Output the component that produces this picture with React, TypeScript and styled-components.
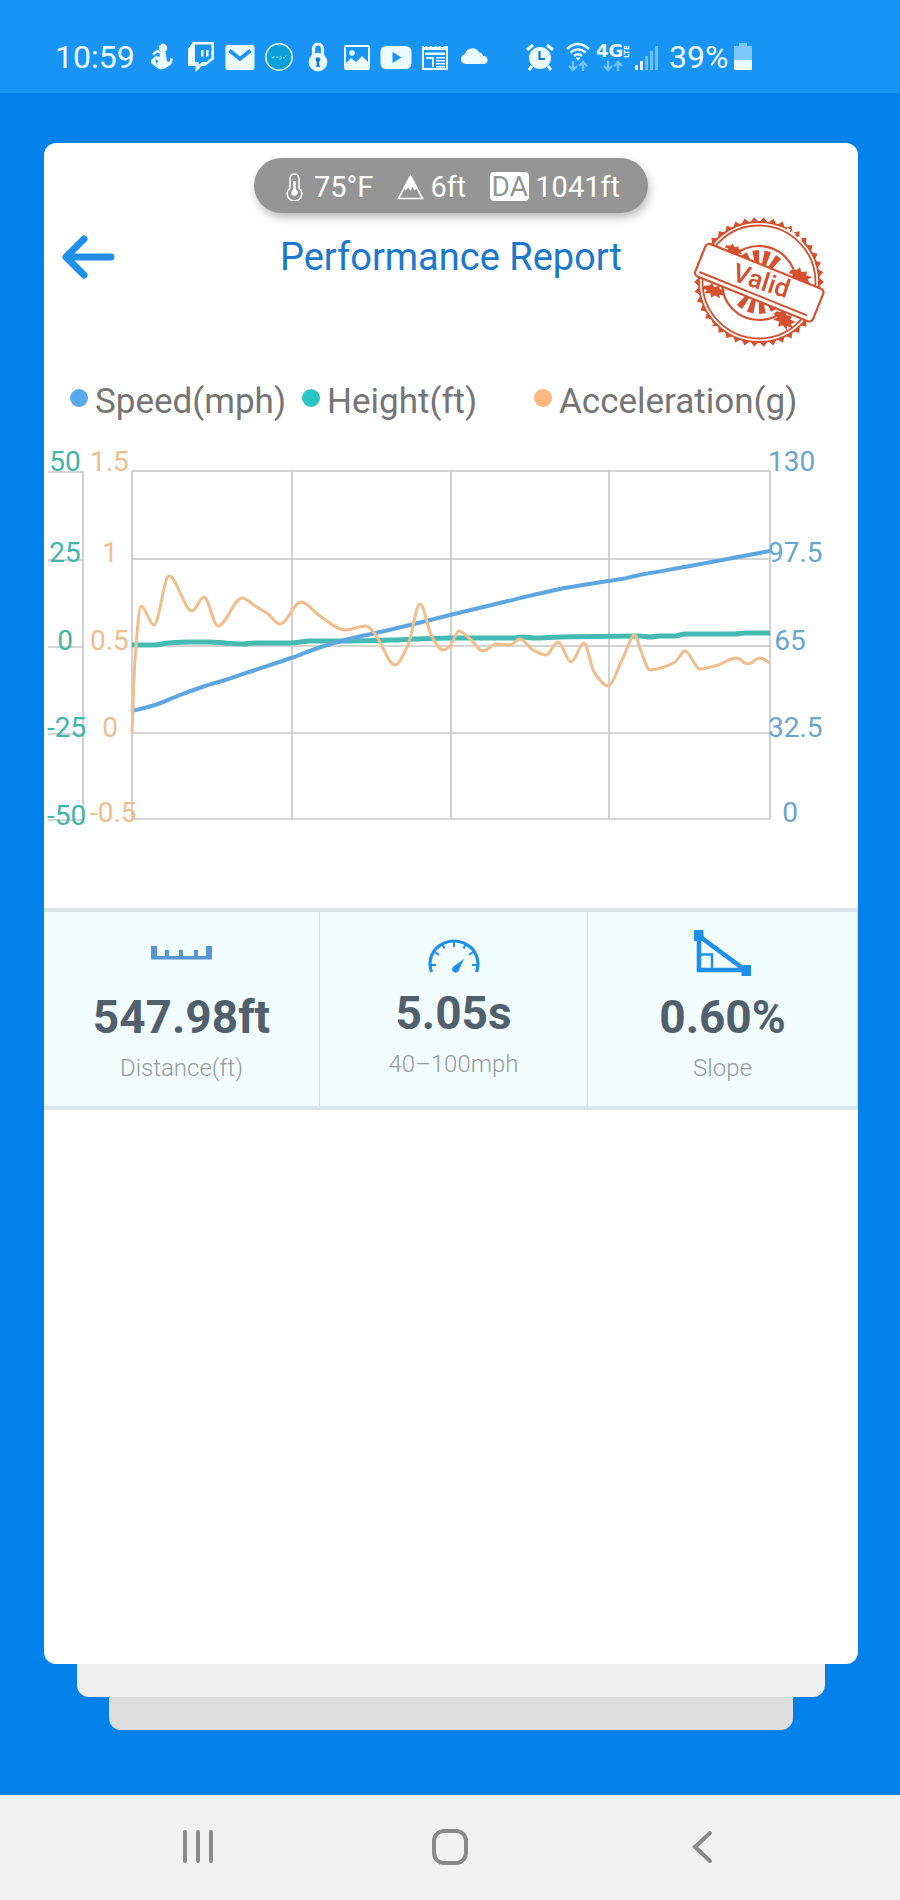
import React from "react";
import styled, { createGlobalStyle } from "styled-components";

const GlobalStyle = createGlobalStyle`
  *, *::before, *::after { box-sizing: border-box; }
  body { margin: 0; background: #0281eb; }
  button { border: 0; padding: 0; background: none; font: inherit; cursor: pointer; }
  h1, p, ul, dl, dd { margin: 0; padding: 0; }
  svg { display: block; flex: none; }
`;

const ICE = "#ebfbff";
const BLUE = "#1e90ea";
const STAMP = "#d4502f";

const Screen = styled.div`
  display: flex;
  flex-direction: column;
  min-height: 100vh;
  font-family: Roboto, "Liberation Sans", sans-serif;
`;

/* ---------- status bar ---------- */

const StatusBar = styled.header`
  display: flex;
  align-items: center;
  height: 93px;
  padding: 21px 0 0 55px;
  background: #1894f5;
  color: ${ICE};
  overflow: hidden;
`;

const StatusText = styled.span`
  font-size: 32px;
  line-height: 38px;
  white-space: nowrap;
`;

const IconGroup = styled.div<{ $start: number }>`
  display: flex;
  align-items: center;
  margin-left: ${(p) => p.$start}px;
`;

const IconSlot = styled.span<{ $width?: number }>`
  display: flex;
  justify-content: center;
  flex: none;
  width: ${(p) => p.$width ?? 39}px;
`;

const StatusIcon = ({ width = 30, children }: { width?: number; children: React.ReactNode }) => (
  <svg width={width} height={32} viewBox={`0 0 ${width} 32`} fill={ICE} aria-hidden="true">
    {children}
  </svg>
);

const BabyIcon = () => (
  <StatusIcon>
    <circle cx="16" cy="7" r="4.200" />
    <path d="M13 11 L18.500 10.500 L19.500 18 Q20 22 22.500 20.500 L23.500 17 L26 18 Q25 24 21 25.500 Q18 28.500 13 28.500 L9 26 L4 22 L4 19 L9 15 L12.500 16 Z" />
    <path d="M6 13.500 L10 10 L13 11.500" fill="none" stroke={ICE} strokeWidth="2.400" />
    <path d="M8.500 18 L11.500 20 L9 23 Z" fill="#1894f5" />
  </StatusIcon>
);

const TwitchIcon = () => (
  <StatusIcon>
    <path
      fillRule="evenodd"
      d="M2 8 L7 1 H28 V18 L19 25 H16 L9.500 31 V25 H2 Z M9 3.500 V21 H12.500 V24 L16 21 H20.500 L25.500 16.500 V3.500 Z"
    />
    <path d="M15 9 h2.500 v6.500 h-2.500 Z M20 9 h2.500 v6.500 h-2.500 Z" />
  </StatusIcon>
);

const MailIcon = () => (
  <StatusIcon>
    <rect x="0.500" y="4" width="29" height="25" rx="2.500" />
    <path d="M4.500 9.500 L15 18 L25.500 9.500" fill="none" stroke="#1894f5" strokeWidth="3.600" />
  </StatusIcon>
);

const BadgeIcon = () => (
  <StatusIcon>
    <circle cx="15" cy="16" r="13.200" fill="#0aa0dc" stroke={ICE} strokeWidth="1.500" />
    <path d="M8 16 q1.500 3 2 -1 M12 17 q1 -3 2 0 M15.500 16 q1.500 -2 2 1 q-1 2 -2 1 M19 15.500 l1 2 l2 -3" fill="none" stroke="#8fdcf5" strokeWidth="0.900" />
  </StatusIcon>
);

const LockIcon = () => (
  <StatusIcon>
    <path d="M10.500 14 V8 a4.500 5 0 0 1 9 0 V14" fill="none" stroke={ICE} strokeWidth="3.200" />
    <circle cx="15" cy="21" r="9.300" />
    <path d="M15 16.200 a2.400 2.400 0 0 1 1.200 4.500 V24.500 h1 v1.300 h-4.500 v-1.300 h1 V20.700 A2.400 2.400 0 0 1 15 16.200 Z" fill="#1878cc" />
  </StatusIcon>
);

const PictureIcon = () => (
  <StatusIcon>
    <path fillRule="evenodd" d="M4 4 H26 a2 2 0 0 1 2 2 V27 a2 2 0 0 1 -2 2 H4 a2 2 0 0 1 -2 -2 V6 a2 2 0 0 1 2 -2 Z M4 6 V22 L9 17 L14 21 L20 15 L26 21 V6 Z" />
    <circle cx="10" cy="12" r="2.800" />
  </StatusIcon>
);

const VideoIcon = () => (
  <StatusIcon width={32}>
    <rect x="0.500" y="5" width="31" height="23" rx="5.500" />
    <path d="M12.500 11 L21.500 16.500 L12.500 22 Z" fill="#1894f5" />
  </StatusIcon>
);

const NewsIcon = () => (
  <StatusIcon>
    <path d="M2 8 V5 h1.500 v1.500 h2 V5 h2 v1.500 h2.500 V5 h2 v1.500 h2.500 V5 h2 v1.500 h2.500 V5 h2 v1.500 h2.500 V5 H28 V9 H2 Z" />
    <rect x="3" y="7" width="24" height="21" fill="none" stroke={ICE} strokeWidth="2" />
    <path d="M5 11.500 H25 V14 H5 Z M6 16 h8 v10 h-2 v-8 h-6 Z M16 16 H25 V17.500 H16 Z M16 19 H25 V20.500 H16 Z M16 22 H25 V23.500 H16 Z M16 25 H25 V26.500 H16 Z" />
  </StatusIcon>
);

const CloudIcon = () => (
  <StatusIcon>
    <path d="M6 23 a5 5 0 0 1 0 -9.800 a7.500 7.500 0 0 1 14 -1.700 a4 4 0 0 1 4 3.500 a4 4 0 0 1 1 8 Z" />
  </StatusIcon>
);

const AlarmIcon = () => (
  <StatusIcon>
    <circle cx="15" cy="17" r="11" />
    <path d="M2 9 L8 4 M28 9 L22 4 M7 25 L4 29 M23 25 L26 29" stroke={ICE} strokeWidth="3" />
    <path d="M14.500 10 V18 H20" fill="none" stroke="#1878cc" strokeWidth="2.200" />
  </StatusIcon>
);

const DataArrows = ({ x }: { x: number }) => (
  <path
    d={`M${x} 20 v9 m-4 -4 l4 4 l4 -4 M${x + 10} 30 v-9 m-4 4 l4 -4 l4 4`}
    fill="none"
    stroke="#74c3fb"
    strokeWidth="2.400"
  />
);

const WifiIcon = () => (
  <StatusIcon>
    <g fill="none" stroke={ICE} strokeWidth="2.600">
      <path d="M4 8 Q15 -2 26 8" />
      <path d="M7.500 11.500 Q15 5 22.500 11.500" />
      <path d="M11 15 Q15 11.500 19 15" />
    </g>
    <path d="M12.500 16.500 H17.500 L15 20 Z" />
    <DataArrows x={10} />
  </StatusIcon>
);

const NetworkIcon = () => (
  <StatusIcon width={34}>
    <text x="0" y="16" fontFamily="DejaVu Sans" fontWeight="700" fontSize="18">
      4G
    </text>
    <text transform="translate(33 17) rotate(-90)" fontFamily="DejaVu Sans" fontWeight="700" fontSize="7">
      LTE
    </text>
    <DataArrows x={12} />
  </StatusIcon>
);

const SignalIcon = () => (
  <StatusIcon width={26}>
    <path d="M1 24 h3 v5 h-3 Z M6 20 h3 v9 h-3 Z" />
    <path d="M11 15 h3 v14 h-3 Z M16 10 h3 v19 h-3 Z M21 5 h3 v24 h-3 Z" fill="#6dbffa" />
  </StatusIcon>
);

const BatteryIcon = () => (
  <StatusIcon width={18}>
    <path d="M5 2 h8 v3 h5 v14 H0 V5 h5 Z" fill="#7cc6fb" />
    <path d="M0 19 H18 V28 a1 1 0 0 1 -1 1 H1 a1 1 0 0 1 -1 -1 Z" />
  </StatusIcon>
);

/* ---------- card ---------- */

const Stage = styled.main`
  display: flex;
  flex-direction: column;
  flex: 1;
  padding: 50px 42px 65px 44px;
  background: #0281eb;
`;

const Card = styled.section`
  display: flex;
  flex-direction: column;
  flex: 1;
  padding-top: 15px;
  border-radius: 12px;
  background: #fff;
`;

const StackedEdge = styled.div<{ $inset: number; $color: string }>`
  height: 33px;
  margin: 0 ${(p) => p.$inset}px;
  border-radius: 0 0 12px 12px;
  background: ${(p) => p.$color};
`;

const Conditions = styled.ul`
  display: flex;
  align-items: center;
  align-self: center;
  gap: 24px;
  height: 55px;
  padding: 2px 28px 0 32px;
  border-radius: 28px;
  background: #959595;
  box-shadow: 2px 5px 8px rgba(0, 0, 0, 0.25);
  color: #fff;
  font-size: 29px;
  line-height: 34px;
  list-style: none;
`;

const Condition = styled.li<{ $gap: number }>`
  display: flex;
  align-items: center;
  gap: ${(p) => p.$gap}px;
  white-space: nowrap;
`;

const AltitudeTag = styled.abbr`
  width: 39px;
  height: 29px;
  border-radius: 4px;
  background: #fff;
  color: #959595;
  font-size: 28px;
  line-height: 30px;
  text-align: center;
`;

const TitleBar = styled.div`
  display: grid;
  grid-template-columns: 1fr auto 1fr;
  align-items: start;
  margin-top: 4px;
  padding: 0 33px 0 17px;
`;

const BackButton = styled.button`
  display: flex;
  align-items: center;
  width: 54px;
  height: 80px;
`;

const Title = styled.h1`
  padding-left: 16px;
  color: #1b78ca;
  font-size: 38px;
  font-weight: 400;
  line-height: 80px;
  white-space: nowrap;
`;

const StampHolder = styled.div`
  justify-self: end;
`;

/* ---------- legend and chart ---------- */

const Legend = styled.ul`
  display: grid;
  grid-template-columns: repeat(3, minmax(0, 1fr));
  margin-top: 34px;
  padding: 0 92px 0 26px;
  color: #757575;
  font-size: 35px;
  line-height: 42px;
  list-style: none;
`;

const LegendItem = styled.li`
  display: flex;
  gap: 7px;
  white-space: nowrap;
`;

const Dot = styled.span<{ $color: string }>`
  flex: none;
  width: 18px;
  height: 18px;
  margin-top: 8px;
  border-radius: 50%;
  background: ${(p) => p.$color};
`;

const ChartSvg = styled.svg`
  width: 100%;
  height: auto;
  margin-top: 13px;
  font-size: 28px;
`;

type Point = [number, number];

/* Points are in plot units: origin at the plot's top left, 638 wide and 348 high. */
const speed: Point[] = [
  [0, 240], [23, 234], [48, 224], [73, 215], [93, 209], [123, 199], [159, 187], [186, 177],
  [213, 169], [248, 161], [278, 154], [318, 144], [376, 130], [428, 118], [451, 114], [476, 110],
  [490, 108], [503, 105], [558, 95], [638, 80],
];
const height: Point[] = [
  [0, 174], [23, 174], [36, 172], [58, 171], [78, 171], [93, 172], [111, 173], [123, 172],
  [159, 172], [178, 170], [213, 170], [263, 169], [283, 168], [318, 167], [383, 167], [390, 166],
  [403, 167], [428, 166], [508, 165], [518, 166], [528, 165], [543, 165], [553, 163], [603, 163],
  [613, 162], [638, 162],
];
const acceleration: Point[] = [
  [0, 262], [3, 189], [9, 135], [22, 154], [37, 105], [60, 140], [72, 126], [86, 155],
  [110, 127], [123, 135], [136, 143], [148, 153], [169, 131], [188, 145], [213, 159], [234, 155],
  [243, 163], [263, 194], [276, 174], [288, 133], [300, 166], [311, 179], [318, 175], [327, 160],
  [338, 168], [351, 180], [364, 173], [378, 174], [388, 168], [401, 179], [414, 184], [426, 171],
  [439, 191], [452, 172], [462, 201], [476, 215], [490, 189], [503, 164], [509, 180], [518, 199],
  [529, 197], [543, 191], [553, 180], [568, 198], [586, 194], [604, 187], [616, 193], [628, 187],
  [638, 192],
];

/* Monotone cubic curve through the points. */
function curve(points: Point[]): string {
  const slopes = points.slice(1).map(([x, y], i) => (y - points[i][1]) / (x - points[i][0]));
  const tangents = points.map((_, i) => {
    if (i === 0) return slopes[0];
    if (i === points.length - 1) return slopes[i - 1];
    const a = slopes[i - 1];
    const b = slopes[i];
    return a * b <= 0 ? 0 : (2 * a * b) / (a + b);
  });
  return points.reduce((d, [x, y], i) => {
    if (i === 0) return `M${x} ${y}`;
    const [px, py] = points[i - 1];
    const h = (x - px) / 3;
    return `${d} C${px + h} ${py + h * tangents[i - 1]} ${x - h} ${y - h * tangents[i]} ${x} ${y}`;
  }, "");
}

const rows = [0, 88, 175, 262, 348];
const columns = [0, 160, 319, 477, 638];

/* Short labels are centred on the axis; long ones start at its left edge. */
const axes = [
  { center: -67, left: -85, color: "#3fb5a8", baselines: [0, 91, 179, 266, 354], labels: ["50", "25", "0", "-25", "-50"] },
  { center: -22, left: -42, color: "#efbd8c", baselines: [0, 91, 179, 266, 351], labels: ["1.5", "1", "0.5", "0", "-0.5"] },
  { center: 658, left: 636, color: "#68a5cf", baselines: [0, 91, 179, 266, 351], labels: ["130", "97.5", "65", "32.5", "0"] },
];

const Chart = () => (
  <ChartSvg viewBox="-88 -35 814 400" role="img" aria-label="Speed, height and acceleration over the run">
    <g fill="none" stroke="#c6c6c6" strokeWidth="1.600">
      {rows.map((y) => (
        <path key={y} d={`M0 ${y} H638 M-84 ${y + 1} H-49`} />
      ))}
      {columns.map((x) => (
        <path key={x} d={`M${x} 0 V348`} />
      ))}
      <path d="M-49 0 V350" />
    </g>
    {axes.map((axis) =>
      axis.labels.map((label, i) => {
        const long = label.length > 2;
        return (
          <text
            key={axis.color + label}
            x={long ? axis.left : axis.center}
            y={axis.baselines[i]}
            textAnchor={long ? "start" : "middle"}
            fill={axis.color}
          >
            {label}
          </text>
        );
      })
    )}
    <g fill="none" strokeLinejoin="round">
      <path d={curve(height)} stroke="#45bab2" strokeWidth="5" />
      <path d={curve(speed)} stroke="#5da6df" strokeWidth="4" />
      <path d={curve(acceleration)} stroke="#f0bd8c" strokeWidth="3" />
    </g>
  </ChartSvg>
);

/* ---------- stamp ---------- */

const polar = (r: number, deg: number) => {
  const a = (deg * Math.PI) / 180;
  return `${(r * Math.cos(a)).toFixed(1)} ${(r * Math.sin(a)).toFixed(1)}`;
};

const teeth = Array.from({ length: 42 }, (_, i) => {
  const a = (i * 360) / 42;
  return `M${polar(60, a - 4)} L${polar(65, a)} L${polar(60, a + 4)} Z`;
}).join(" ");

const wedges = [-118, -96, -74, -52, 62, 84, 106, 128]
  .map((a) => `M${polar(17, a - 7)} L${polar(32, a - 6)} L${polar(32, a + 6)} L${polar(17, a + 7)} Z`)
  .join(" ");

const blot = "M-11 -3 L-6 -5 L-4 -9 L-1 -5 L4 -8 L5 -4 L11 -5 L8 -1 L12 2 L6 3 L8 7 L2 5 L-1 9 L-3 4 L-9 6 L-7 1 L-12 1 Z";

const Stamp = () => (
  <svg width={132} height={130} viewBox="-66 -65 132 130" role="img" aria-label="Valid">
    <path d={teeth} fill={STAMP} />
    <g fill="none" stroke={STAMP}>
      <circle r="60" strokeWidth="1.800" />
      <circle r="56.500" strokeWidth="1.800" />
      <circle cy="1" r="37" strokeWidth="2.200" />
    </g>
    <path d={wedges} fill={STAMP} />
    <g fill={STAMP}>
      <path d={blot} transform="translate(41 -5) rotate(25)" />
      <path d={blot} transform="translate(-25 -32) rotate(20) scale(0.8 0.6)" />
      <path d={blot} transform="translate(-45 9) rotate(15) scale(1 0.8)" />
      <path d={blot} transform="translate(25 38) rotate(35)" />
    </g>
    <path d="M32 -50 l4 3 M39 -45 l3 4 M-52 37 l6 6 M28 -53 l3 2" stroke="#fff" strokeWidth="3" />
    <g transform="rotate(22)">
      <rect x="-63" y="-17" width="127" height="35" rx="4" fill="#fff" stroke={STAMP} strokeWidth="2.200" />
      <path d="M-59 13 H57" stroke={STAMP} strokeWidth="2" />
    </g>
    <text transform="rotate(18)" x="2" y="7" fill={STAMP} fontSize="26" fontWeight="500" textAnchor="middle">
      Valid
    </text>
  </svg>
);

/* ---------- results ---------- */

const Results = styled.dl`
  display: grid;
  grid-template-columns: 276fr 268fr 270fr;
  margin-top: 72px;
  border: solid #d9e4e6;
  border-width: 4px 0;
  background: #f2fdfd;
`;

const Result = styled.div`
  display: flex;
  flex-direction: column;
  align-items: center;
  height: 194px;
  padding-top: 11px;
  border-right: 1px solid #d5dfe1;
`;

const ResultIcon = styled.div<{ $height: number }>`
  display: flex;
  align-items: center;
  order: -2;
  height: ${(p) => p.$height}px;
`;

const ResultName = styled.dt`
  margin-top: 9px;
  color: #959b9b;
  font-size: 24px;
  font-weight: 300;
  line-height: 30px;
`;

const ResultValue = styled.dd`
  order: -1;
  margin-top: 7px;
  color: #52606d;
  font-size: 46px;
  font-weight: 700;
  line-height: 54px;
`;

const RulerIcon = () => (
  <svg width={62} height={14} viewBox="0 0 62 14" fill="#5796d1" aria-hidden="true">
    <path d="M0 0 h6 v10 h8 v-6 h4 v6 h10 v-6 h4 v6 h11 v-6 h4 v6 h8 v-10 h6 v13.500 h-61 Z" />
  </svg>
);

const GaugeIcon = () => (
  <svg width={52} height={44} viewBox="0 -10 52 44" fill="none" stroke={BLUE} aria-hidden="true">
    <path d="M3.500 33 Q-1 20 8 9.500 Q16 2 26 2 Q36 2 44 9.500 Q53 20 48.500 33" strokeWidth="3.200" />
    <path d="M3 26 h5 M7 13 l4 3 M14.500 5.500 l2 4 M26 3 v5 M37.500 5.500 l-2 4 M45 13 l-4 3 M49 26 h-5" strokeWidth="2" />
    <path d="M36 20 L31 31 a3.500 3.500 0 1 1 -5 -4 Z" fill={BLUE} stroke="none" />
  </svg>
);

const SlopeIcon = () => (
  <svg width={57} height={46} viewBox="0 0 57 46" fill="none" stroke={BLUE} aria-hidden="true">
    <path d="M5 6 V40 H51 Z" strokeWidth="4.600" />
    <path d="M6 24.500 H18 V39" strokeWidth="2.400" />
    <path d="M0 0 h9.500 v11 h-9.500 Z M47.500 35 h9.500 v11 h-9.500 Z" fill={BLUE} stroke="none" />
  </svg>
);

/* ---------- navigation bar ---------- */

const NavBar = styled.nav`
  display: grid;
  grid-template-columns: repeat(3, 1fr);
  height: 105px;
  padding: 0 72px;
  background: #f1f1f1;
`;

const NavButton = styled.button`
  display: flex;
  align-items: center;
  justify-content: center;
`;

const NavIcon = ({ children }: { children: React.ReactNode }) => (
  <svg width={40} height={42} viewBox="0 0 40 42" fill="none" stroke="#8a8a8a" strokeWidth="4" strokeLinecap="round" aria-hidden="true">
    {children}
  </svg>
);

export default function App() {
  return (
    <Screen>
      <GlobalStyle />
      <StatusBar>
        <StatusText>10:59</StatusText>
        <IconGroup $start={8}>
          {[BabyIcon, TwitchIcon, MailIcon, BadgeIcon, LockIcon, PictureIcon, VideoIcon, NewsIcon, CloudIcon].map(
            (Icon, i) => (
              <IconSlot key={i}>
                <Icon />
              </IconSlot>
            )
          )}
        </IconGroup>
        <IconGroup $start={27}>
          <IconSlot><AlarmIcon /></IconSlot>
          <IconSlot $width={36}><WifiIcon /></IconSlot>
          <IconSlot $width={34}><NetworkIcon /></IconSlot>
          <IconSlot $width={34}><SignalIcon /></IconSlot>
          <IconSlot $width={70}><StatusText>39%</StatusText></IconSlot>
          <BatteryIcon />
        </IconGroup>
      </StatusBar>

      <Stage>
        <Card>
          <Conditions>
            <Condition $gap={11}>
              <svg width={17} height={28} viewBox="0 0 17 28" fill="none" stroke="#fff" aria-hidden="true">
                <path d="M4 15 V5.500 a4.500 4.500 0 0 1 9 0 V15 a7.300 7.300 0 1 1 -9 0 Z" strokeWidth="1.500" />
                <path d="M8.500 8 V20" strokeWidth="2.400" />
                <circle cx="8.500" cy="19.500" r="3.200" fill="#fff" stroke="none" />
              </svg>
              75°F
            </Condition>
            <Condition $gap={6}>
              <svg width={27} height={26} viewBox="0 0 27 26" fill="none" stroke="#fff" aria-hidden="true">
                <path d="M13.500 2 L25.500 24.500 H1.500 Z" strokeWidth="1.600" />
                <path d="M13.500 1 L20 14 L17.500 16.500 L15.500 12.500 L13.500 17 L11.500 13.500 L8.500 16.500 L7 14 Z" fill="#fff" stroke="none" />
              </svg>
              6ft
            </Condition>
            <Condition $gap={6}>
              <AltitudeTag>DA</AltitudeTag>
              1041ft
            </Condition>
          </Conditions>

          <TitleBar>
            <BackButton type="button" aria-label="Back">
              <svg width={54} height={44} viewBox="0 0 54 44" fill="none" stroke={BLUE} strokeWidth="7" strokeLinecap="round" strokeLinejoin="round" aria-hidden="true">
                <path d="M23 4 L5 22 L23 40 M6 22 H50" />
              </svg>
            </BackButton>
            <Title>Performance Report</Title>
            <StampHolder>
              <Stamp />
            </StampHolder>
          </TitleBar>

          <Legend>
            <LegendItem><Dot $color="#58aaea" />Speed(mph)</LegendItem>
            <LegendItem><Dot $color="#2cc5c6" />Height(ft)</LegendItem>
            <LegendItem><Dot $color="#fdb77f" />Acceleration(g)</LegendItem>
          </Legend>

          <Chart />

          <Results>
            <Result>
              <ResultIcon $height={60}><RulerIcon /></ResultIcon>
              <ResultName>Distance(ft)</ResultName>
              <ResultValue>547.98ft</ResultValue>
            </Result>
            <Result>
              <ResultIcon $height={56}><GaugeIcon /></ResultIcon>
              <ResultName>40–100mph</ResultName>
              <ResultValue>5.05s</ResultValue>
            </Result>
            <Result>
              <ResultIcon $height={60}><SlopeIcon /></ResultIcon>
              <ResultName>Slope</ResultName>
              <ResultValue>0.60%</ResultValue>
            </Result>
          </Results>
        </Card>
        <StackedEdge $inset={33} $color="#eeeeee" />
        <StackedEdge $inset={65} $color="#dddddd" />
      </Stage>

      <NavBar>
        <NavButton type="button" aria-label="Recent apps">
          <NavIcon><path d="M7 5 V34 M20 5 V34 M33 5 V34" /></NavIcon>
        </NavButton>
        <NavButton type="button" aria-label="Home">
          <NavIcon><rect x="4" y="4" width="32" height="32" rx="10" /></NavIcon>
        </NavButton>
        <NavButton type="button" aria-label="Back">
          <NavIcon><path d="M28 6 L13 20 L28 34" /></NavIcon>
        </NavButton>
      </NavBar>
    </Screen>
  );
}
